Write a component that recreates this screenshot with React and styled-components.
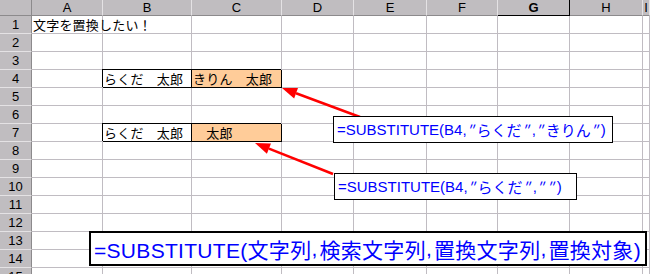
import React from "react";
import styled, { createGlobalStyle } from "styled-components";

const GlobalStyle = createGlobalStyle`
  html, body {
    margin: 0;
    padding: 0;
    background: #ffffff;
    overflow: hidden;
  }
`;

const GRID = "#c0bcc2";
const HEAD_BG = "#c0bdc0";
const JP = `"Noto Sans CJK JP", "Liberation Sans", sans-serif`;

const Sheet = styled.div`
  position: relative;
  width: 650px;
  height: 274px;
  overflow: hidden;
  display: grid;
  grid-template-columns: 32px 71px 89px 90px 72px 73px 71px 72px 73px 1fr;
  grid-template-rows: 16px repeat(15, 18px);
  background: #ffffff;
  font-family: ${JP};
`;

const Corner = styled.div`
  background: ${HEAD_BG};
  border-right: 1px solid #8c8a8c;
  border-bottom: 1px solid #8c8a8c;
  box-sizing: border-box;
`;

const ColHeader = styled.div`
  background: ${HEAD_BG};
  box-sizing: border-box;
  border-right: 1px solid ${(p) => (p.$active ? "#000" : "#e4e2e4")};
  border-bottom: 1px solid ${(p) => (p.$active ? "#000" : "#8c8a8c")};
  display: flex;
  align-items: center;
  justify-content: center;
  font-family: "Liberation Sans", sans-serif;
  font-size: 13px;
  font-weight: ${(p) => (p.$active ? 700 : 400)};
  color: #000;
  line-height: 1;
`;

const RowHeader = styled.div`
  background: ${HEAD_BG};
  box-sizing: border-box;
  border-right: 1px solid #8c8a8c;
  border-bottom: 1px solid #e4e2e4;
  display: flex;
  align-items: center;
  justify-content: center;
  font-family: "Liberation Sans", sans-serif;
  font-size: 13px;
  color: #000;
  line-height: 1;
`;

const Cell = styled.div`
  position: relative;
  box-sizing: border-box;
  border-right: 1px solid ${(p) => (p.$boxed ? "#000" : GRID)};
  border-bottom: 1px solid ${(p) => (p.$boxed ? "#000" : GRID)};
  box-shadow: ${(p) => (p.$boxed ? "-1px -1px 0 0 #000" : "none")};
  z-index: ${(p) => (p.$boxed ? 1 : 0)};
  background: ${(p) => p.$fill || "transparent"};
  padding-left: 1px;
  font-size: 13px;
  letter-spacing: 0.2px;
  line-height: 17px;
  white-space: nowrap;
  color: #000;
`;

const Callout = styled.div`
  position: absolute;
  left: ${(p) => p.$x}px;
  top: ${(p) => p.$y}px;
  width: ${(p) => p.$w}px;
  height: ${(p) => p.$h}px;
  box-sizing: border-box;
  border: ${(p) => p.$bw || 1}px solid #000;
  background: #ffffff;
  display: flex;
  align-items: center;
  padding-left: ${(p) => p.$pad || 3}px;
  color: #0000ff;
  font-family: "Liberation Sans", "Noto Sans CJK JP", sans-serif;
  font-size: ${(p) => p.$size}px;
  letter-spacing: ${(p) => p.$ls || 0}px;
  white-space: nowrap;
  z-index: 3;
`;

const Quote = styled.span`
  display: inline-block;
  width: 10px;
  text-align: center;
  font-family: "Noto Sans CJK JP", sans-serif;
  transform: skewX(-12deg);
`;

const Comma = styled.span`
  display: inline-block;
  width: 8px;
`;

const Overlay = styled.svg`
  position: absolute;
  left: 0;
  top: 0;
  pointer-events: none;
  z-index: 2;
`;

const columns = ["A", "B", "C", "D", "E", "F", "G", "H", "I"];

const cellData = {
  "1-0": { text: "文字を置換したい！" },
  "4-1": { text: "らくだ　太郎", boxed: true },
  "4-2": { text: "きりん　太郎", boxed: true, fill: "#ffcc99" },
  "7-1": { text: "らくだ　太郎", boxed: true },
  "7-2": { text: "　太郎", boxed: true, fill: "#ffcc99" },
};

function Arrow({ tip, tail }) {
  const dx = tail[0] - tip[0];
  const dy = tail[1] - tip[1];
  const len = Math.hypot(dx, dy);
  const ux = dx / len;
  const uy = dy / len;
  const bx = tip[0] + ux * 15;
  const by = tip[1] + uy * 15;
  const px = -uy * 5.5;
  const py = ux * 5.5;
  return (
    <g>
      <line x1={bx} y1={by} x2={tail[0]} y2={tail[1]} stroke="#ff0000" strokeWidth="2.5" />
      <polygon
        points={`${tip[0]},${tip[1]} ${bx + px},${by + py} ${bx - px},${by - py}`}
        fill="#ff0000"
      />
    </g>
  );
}

const Q = () => <Quote>″</Quote>;

export default function App() {
  const rows = [];
  for (let r = 1; r <= 15; r++) {
    rows.push(<RowHeader key={`rh${r}`}>{r}</RowHeader>);
    columns.forEach((c, i) => {
      const d = cellData[`${r}-${i}`] || {};
      rows.push(
        <Cell key={`${r}-${c}`} $boxed={d.boxed} $fill={d.fill}>
          {d.text}
        </Cell>
      );
    });
  }

  return (
    <>
      <GlobalStyle />
      <Sheet>
        <Corner />
        {columns.map((c) => (
          <ColHeader key={c} $active={c === "G"}>
            {c}
          </ColHeader>
        ))}
        {rows}

        <Overlay width="650" height="274">
          <Arrow tip={[282, 88]} tail={[360, 117]} />
          <Arrow tip={[255, 143]} tail={[333, 174]} />
        </Overlay>

        <Callout $x={333} $y={116} $w={280} $h={27} $size={15}>
          =SUBSTITUTE(B4,<Q />らくだ<Q />,<Q />きりん<Q />)
        </Callout>
        <Callout $x={334} $y={173} $w={243} $h={27} $size={15}>
          =SUBSTITUTE(B4,<Q />らくだ<Q />,<Q /><Q />)
        </Callout>
        <Callout $x={89} $y={231} $w={558} $h={35} $size={21} $ls={0.3} $bw={2}>
          =SUBSTITUTE(文字列<Comma>,</Comma>検索文字列<Comma>,</Comma>置換文字列<Comma>,</Comma>置換対象)
        </Callout>
      </Sheet>
    </>
  );
}
